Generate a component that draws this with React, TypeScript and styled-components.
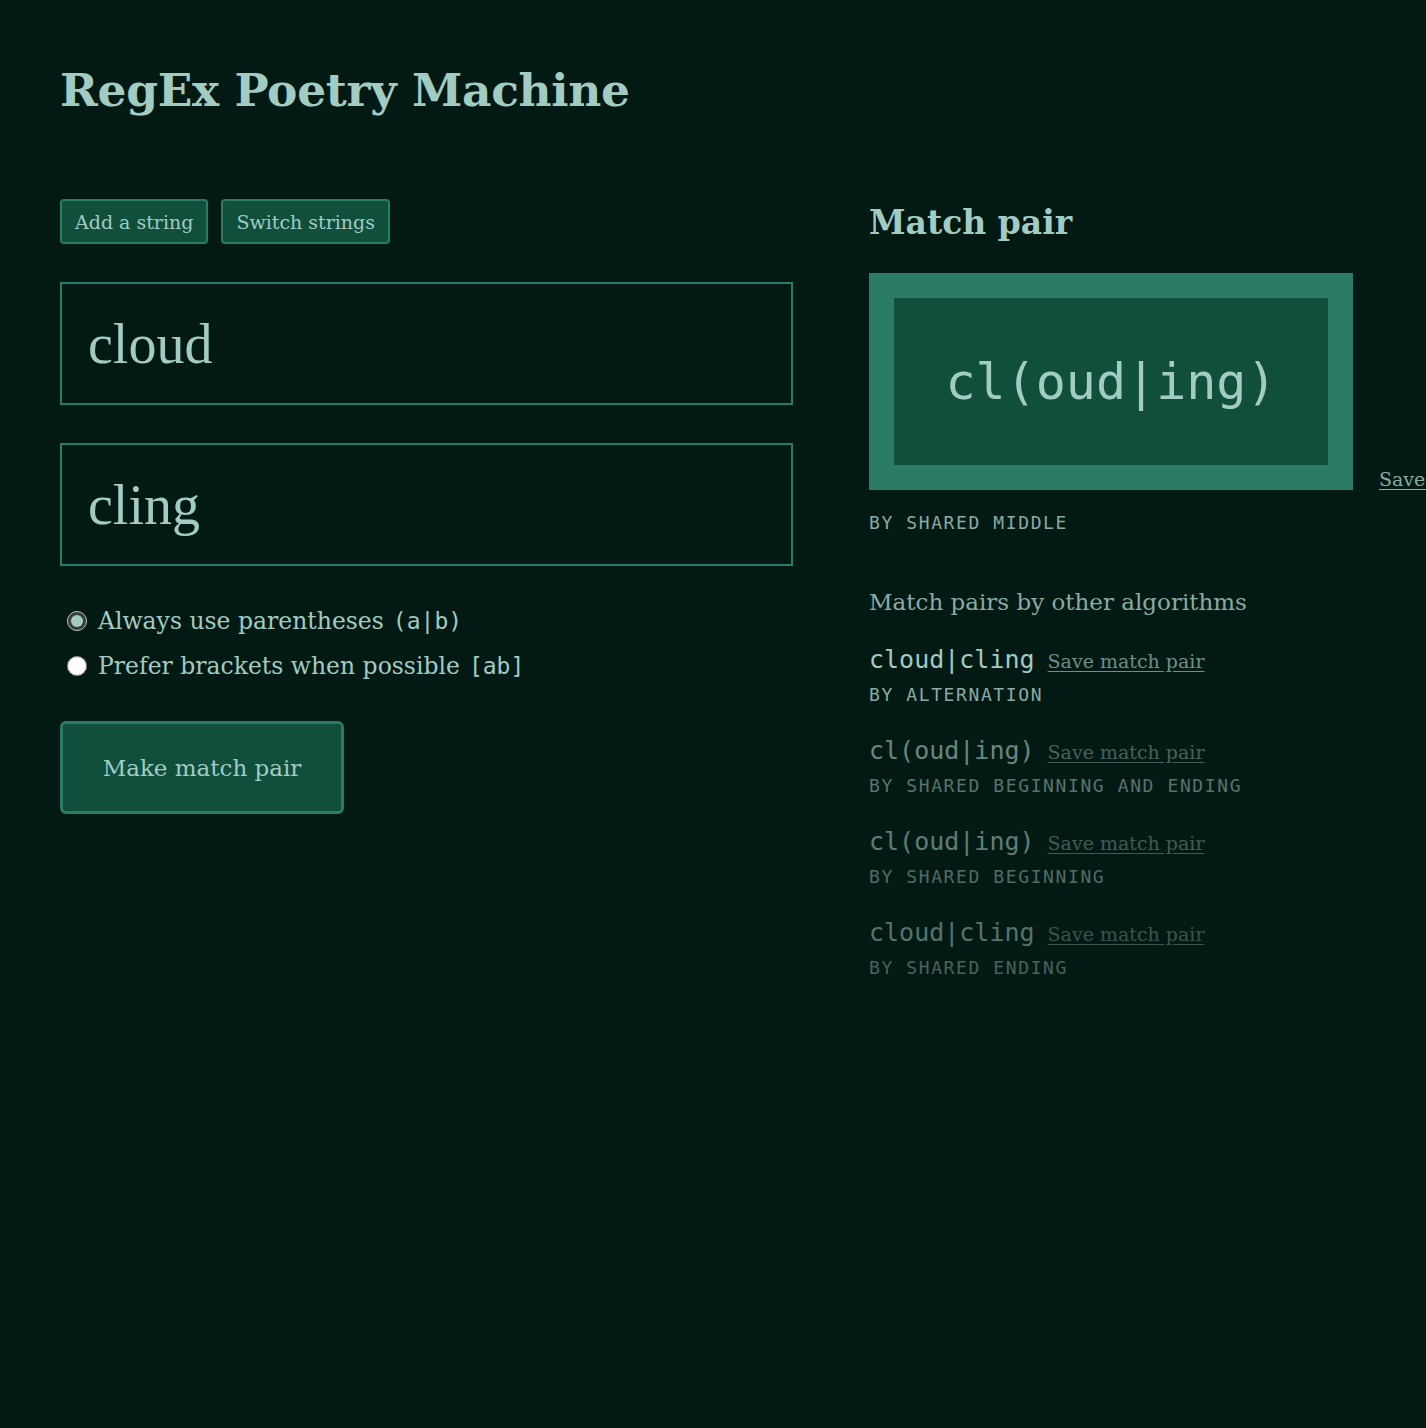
import React, { useState } from "react";
import styled, { createGlobalStyle } from "styled-components";

const COLORS = {
  bg: "#031a14",
  text: "#a2cbc2",
  dim: "#8aaba3",
  border: "#2b7c66",
  fill: "#0f4f3c",
};

const SERIF = `"DejaVu Serif", "Liberation Serif", serif`;
const MONO = `"DejaVu Sans Mono", "Liberation Mono", monospace`;

const GlobalStyle = createGlobalStyle`
  html, body {
    margin: 0;
    padding: 0;
    background: ${COLORS.bg};
    overflow-x: hidden;
  }
  body {
    min-height: 1428px;
    font-family: ${SERIF};
    color: ${COLORS.text};
  }
`;

const Page = styled.div`
  padding: 54px 60px 60px;
`;

const Title = styled.h1`
  margin: 0 0 73px;
  font-size: 45.5px;
  line-height: 72px;
  font-weight: 700;
  letter-spacing: -0.3px;
`;

const Columns = styled.div`
  display: grid;
  grid-template-columns: 733px 1fr;
  column-gap: 76px;
  align-items: start;
`;

const LeftCol = styled.div`
  display: flex;
  flex-direction: column;
`;

const Toolbar = styled.div`
  display: flex;
  gap: 13px;
  margin-bottom: 38px;
`;

const SmallButton = styled.button`
  height: 45px;
  padding: 0 13px;
  background: ${COLORS.fill};
  color: ${COLORS.text};
  border: 2px solid ${COLORS.border};
  border-radius: 4px;
  font-family: ${SERIF};
  font-size: 19px;
`;

const StringInput = styled.input`
  box-sizing: border-box;
  width: 733px;
  height: 123px;
  margin-bottom: 38px;
  padding: 0 26px;
  background: transparent;
  border: 2px solid ${COLORS.border};
  color: ${COLORS.text};
  font-family: "Liberation Serif", serif;
  font-size: 56px;
  outline: none;
`;

const Options = styled.div`
  display: flex;
  flex-direction: column;
  gap: 9px;
  margin-top: -1px;
  margin-bottom: 37px;
`;

const OptionLabel = styled.label`
  display: flex;
  align-items: center;
  height: 36px;
  font-size: 23.5px;
  color: ${COLORS.text};
`;

const Radio = styled.input`
  width: 20px;
  height: 20px;
  margin: 0 11px 0 7px;
  accent-color: #a2cbc2;
`;

const Code = styled.span`
  font-family: ${MONO};
  font-size: 23px;
  margin-left: 9px;
`;

const BigButton = styled.button`
  width: 284px;
  height: 93px;
  background: ${COLORS.fill};
  color: ${COLORS.text};
  border: 3px solid ${COLORS.border};
  border-radius: 6px;
  font-family: ${SERIF};
  font-size: 23px;
`;

const RightCol = styled.div`
  display: flex;
  flex-direction: column;
  margin-top: -2px;
`;

const Heading = styled.h2`
  margin: 0 0 24px;
  font-size: 33px;
  line-height: 52px;
  font-weight: 700;
`;

const PairRow = styled.div`
  display: flex;
  align-items: flex-end;
  gap: 26px;
  white-space: nowrap;
`;

const PairBox = styled.div`
  box-sizing: border-box;
  flex: none;
  width: 484px;
  height: 217px;
  border: 25px solid ${COLORS.border};
  background: ${COLORS.fill};
  display: flex;
  align-items: center;
  justify-content: center;
  font-family: ${MONO};
  font-size: 50px;
  color: ${COLORS.text};
`;

const SaveLink = styled.a<{ $fade?: number }>`
  font-family: ${SERIF};
  font-size: 19px;
  color: ${COLORS.dim};
  text-decoration: underline;
  text-underline-offset: 3px;
  opacity: ${(p) => p.$fade ?? 0.8};
  cursor: pointer;
`;

const Algo = styled.div<{ $fade?: number }>`
  font-family: ${MONO};
  font-size: 18px;
  letter-spacing: 1.6px;
  color: ${COLORS.dim};
  opacity: ${(p) => p.$fade ?? 1};
`;

const MainAlgo = styled(Algo)`
  margin-top: 22px;
`;

const SubHeading = styled.h3`
  margin: 56px 0 30px;
  font-size: 23px;
  font-weight: 400;
  color: ${COLORS.dim};
`;

const AltList = styled.div`
  display: flex;
  flex-direction: column;
  gap: 31px;
`;

const AltItem = styled.div<{ $fade: number }>`
  display: flex;
  flex-direction: column;
  gap: 10px;
  opacity: ${(p) => p.$fade};
`;

const AltLine = styled.div`
  display: flex;
  align-items: baseline;
  gap: 13px;
`;

const AltPattern = styled.span`
  font-family: ${MONO};
  font-size: 25px;
  color: ${COLORS.text};
`;

const alternatives = [
  { pattern: "cloud|cling", by: "BY ALTERNATION", fade: 1 },
  { pattern: "cl(oud|ing)", by: "BY SHARED BEGINNING AND ENDING", fade: 0.62 },
  { pattern: "cl(oud|ing)", by: "BY SHARED BEGINNING", fade: 0.56 },
  { pattern: "cloud|cling", by: "BY SHARED ENDING", fade: 0.5 },
];

export default function App() {
  const [first, setFirst] = useState("cloud");
  const [second, setSecond] = useState("cling");
  const [mode, setMode] = useState("parens");

  return (
    <Page>
      <GlobalStyle />
      <Title>RegEx Poetry Machine</Title>
      <Columns>
        <LeftCol>
          <Toolbar>
            <SmallButton>Add a string</SmallButton>
            <SmallButton
              onClick={() => {
                setFirst(second);
                setSecond(first);
              }}
            >
              Switch strings
            </SmallButton>
          </Toolbar>
          <StringInput value={first} onChange={(e) => setFirst(e.target.value)} />
          <StringInput value={second} onChange={(e) => setSecond(e.target.value)} />
          <Options>
            <OptionLabel>
              <Radio
                type="radio"
                name="mode"
                checked={mode === "parens"}
                onChange={() => setMode("parens")}
              />
              Always use parentheses<Code>(a|b)</Code>
            </OptionLabel>
            <OptionLabel>
              <Radio
                type="radio"
                name="mode"
                checked={mode === "brackets"}
                onChange={() => setMode("brackets")}
              />
              Prefer brackets when possible<Code>[ab]</Code>
            </OptionLabel>
          </Options>
          <div>
            <BigButton>Make match pair</BigButton>
          </div>
        </LeftCol>

        <RightCol>
          <Heading>Match pair</Heading>
          <PairRow>
            <PairBox>cl(oud|ing)</PairBox>
            <SaveLink $fade={1}>Save match pair</SaveLink>
          </PairRow>
          <MainAlgo>BY SHARED MIDDLE</MainAlgo>

          <SubHeading>Match pairs by other algorithms</SubHeading>
          <AltList>
            {alternatives.map((a, i) => (
              <AltItem key={i} $fade={a.fade}>
                <AltLine>
                  <AltPattern>{a.pattern}</AltPattern>
                  <SaveLink>Save match pair</SaveLink>
                </AltLine>
                <Algo>{a.by}</Algo>
              </AltItem>
            ))}
          </AltList>
        </RightCol>
      </Columns>
    </Page>
  );
}
